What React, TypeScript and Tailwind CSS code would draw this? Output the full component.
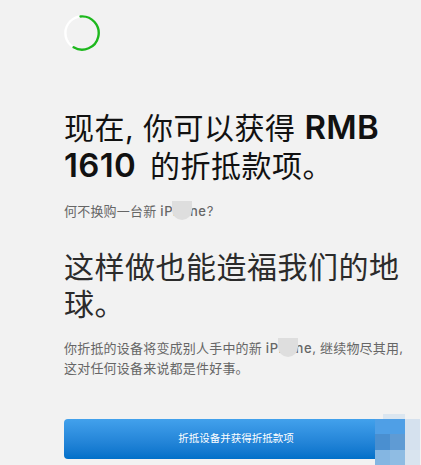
const fontStack = "font-['Inter','Noto_Sans_CJK_SC',sans-serif]";

function Spinner() {
  return (
    <svg width="36" height="36" viewBox="0 0 36 36" className="block">
      <circle cx="18" cy="18" r="16.6" fill="none" stroke="#ffffff" strokeWidth="2.4" />
      <path
        d="M 16.5 1.5 A 16.6 16.6 0 1 1 9.6 32.3"
        fill="none"
        stroke="#1db71d"
        strokeWidth="2.4"
        strokeLinecap="round"
      />
    </svg>
  );
}

// smudge that hides part of the product name
function Smudge() {
  return (
    <span className="absolute left-[12px] top-[0px] h-[19px] w-[20px] rounded-b-full bg-[#dedede]" />
  );
}

function ProductName() {
  return (
    <span className="relative inline-block font-medium tracking-[0.6px]">
      iPhone
      <Smudge />
    </span>
  );
}

function Mosaic() {
  return (
    <>
      <div className="absolute left-[383px] top-[414px] h-[5px] w-[22px] bg-[#dbe6f0]" />
      <div className="absolute left-[375px] top-[419px] grid h-[46px] w-[45px] grid-cols-3 grid-rows-3">
        <div className="bg-[#4f9fe6]" />
        <div className="bg-[#4f9fe6]" />
        <div className="bg-[#d5e1ee]" />
        <div className="bg-[#4a8fd0]" />
        <div className="bg-[#5f9bd4]" />
        <div className="bg-[#d5e1ee]" />
        <div className="bg-[#84b6e2]" />
        <div className="bg-[#8fbce3]" />
        <div className="bg-[#d9e4ef]" />
      </div>
    </>
  );
}

export default function App() {
  return (
    <div className={`relative h-[465px] w-[421px] overflow-hidden bg-[#f2f2f2] pl-16 pr-[13px] ${fontStack}`}>
      <div className="pt-[15px]">
        <Spinner />
      </div>

      <h1 className="mt-[58px] text-[30px] font-normal leading-[37px] tracking-[0.5px] text-[#111111]">
        现在, 你可以获得 <span className="mr-[5px] text-[33px] font-semibold tracking-[0.3px]">RMB 1610</span> 的折抵款项。
      </h1>
      <p className="mt-[16px] text-[13px] leading-[20px] tracking-[0.2px] text-[#666666]">
        何不换购一台新 <ProductName />?
      </p>

      <h2 className="mt-[28px] text-[30px] font-normal leading-[37px] tracking-[0.5px] text-[#2b2b2b]">
        这样做也能造福我们的地球。
      </h2>
      <p className="mt-[15px] text-[13px] leading-[20px] tracking-[0.2px] text-[#666666]">
        你折抵的设备将变成别人手中的新 <ProductName />, 继续物尽其用, 这对任何设备来说都是件好事。
      </p>

      <button className="mt-[41px] flex h-10 w-full items-center justify-center rounded-[4px] bg-gradient-to-b from-[#42a1ec] to-[#0070c9] text-[10.5px] text-white">
        折抵设备并获得折抵款项
      </button>

      <Mosaic />
    </div>
  );
}
